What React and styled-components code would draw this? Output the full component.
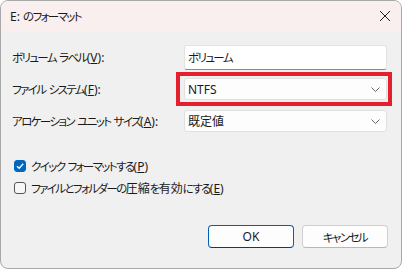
import React from 'react';
import styled, { createGlobalStyle } from 'styled-components';

const Global = createGlobalStyle`
  body {
    margin: 0;
    background: #ffffff;
    font-family: "Noto Sans", "Noto Sans CJK JP", sans-serif;
    font-feature-settings: "palt";
    font-size: 12px;
    color: #1a1a1a;
  }
`;

const Chevron = () => (
  <svg width="9" height="5" viewBox="0 0 9 5">
    <path d="M0.5 0.5 L4.5 4.5 L8.5 0.5" fill="none" stroke="#555" strokeWidth="0.9" />
  </svg>
);

const Check = () => (
  <svg width="10" height="10" viewBox="0 0 10 10">
    <path d="M2 5.2 L4.2 7.3 L8.2 2.8" fill="none" stroke="#fff" strokeWidth="1.3" />
  </svg>
);

const App = () => {
  return (
    <>
      <Global />
      <Window>
        <TitleBar>
          <Title>
            E: <Kana>のフォーマット</Kana>
          </Title>
          <Close>
            <svg width="12" height="12" viewBox="0 0 12 12">
              <path d="M1 1 L11 11 M11 1 L1 11" stroke="#222" strokeWidth="1" />
            </svg>
          </Close>
        </TitleBar>
        <Body>
          <Form>
            <Label>
              <Kana>ボリューム</Kana> <Kana>ラベル</Kana>(<u>V</u>):
            </Label>
            <Input>
              <Kana>ボリューム</Kana>
            </Input>
            <Label>
              <Kana>ファイル</Kana> <Kana>システム</Kana>(<u>F</u>):
            </Label>
            <Highlight>
              <Select>
                <span>NTFS</span>
                <Chevron />
              </Select>
            </Highlight>
            <Label>
              <Kana>アロケーション</Kana> <Kana>ユニット</Kana> <Kana>サイズ</Kana>(<u>A</u>):
            </Label>
            <Select>
              <span>既定値</span>
              <Chevron />
            </Select>
          </Form>
          <Options>
            <Option>
              <Box checked>
                <Check />
              </Box>
              <OptionText>
                <Kana>クイック</Kana> <Kana>フォーマットする</Kana>(<u>P</u>)
              </OptionText>
            </Option>
            <Option>
              <Box />
              <OptionText>
                <Kana>ファイルとフォルダーの</Kana>圧縮<Kana>を</Kana>有効<Kana>にする</Kana>(<u>E</u>)
              </OptionText>
            </Option>
          </Options>
          <Buttons>
            <Button primary>OK</Button>
            <Button>
              <Kana>キャンセル</Kana>
            </Button>
          </Buttons>
        </Body>
      </Window>
    </>
  );
};

export default App;

const Kana = styled.span`
  font-size: 11.5px;
  letter-spacing: -1.6px;
`;

const Window = styled.div`
  width: 400px;
  height: 267px;
  border: 1px solid #a8a8a8;
  border-radius: 8px;
  background: #f0f0f0;
  overflow: hidden;
  display: flex;
  flex-direction: column;
`;

const TitleBar = styled.div`
  height: 30px;
  background: #f9efee;
  display: flex;
  align-items: center;
  justify-content: space-between;
  padding: 0 9px 0 9px;
  flex-shrink: 0;
`;

const Title = styled.span`
  font-size: 12px;
  color: #1a1a1a;
  white-space: nowrap;
`;

const Close = styled.span`
  display: flex;
  width: 14px;
  justify-content: center;
`;

const Body = styled.div`
  flex: 1;
  padding: 10px 0 0 11px;
  display: flex;
  flex-direction: column;
`;

const Form = styled.div`
  display: grid;
  grid-template-columns: 172px 203px;
  grid-auto-rows: 32px;
  align-items: center;
`;

const Label = styled.div`
  font-size: 12px;
  white-space: nowrap;
  u {
    text-decoration-thickness: 1px;
  }
`;

const Input = styled.div`
  height: 25px;
  box-sizing: border-box;
  background: #ffffff;
  border: 1px solid #e3e3e3;
  border-bottom: 1px solid #8a8a8a;
  border-radius: 3px;
  display: flex;
  align-items: center;
  padding-left: 3px;
  font-size: 12px;
`;

const Highlight = styled.div`
  margin: 0 -5px 0 -8px;
  border: 4px solid #e5202e;
  padding: 2px 1px 2px 4px;
`;

const Select = styled.div`
  height: 22px;
  box-sizing: border-box;
  background: #fdfdfd;
  border: 1px solid #e0e0e0;
  border-radius: 3px;
  display: flex;
  align-items: center;
  justify-content: space-between;
  padding: 0 6px 0 3px;
  font-size: 12px;
`;

const Options = styled.div`
  display: flex;
  flex-direction: column;
  gap: 10px;
  margin-top: 23px;
  padding-left: 2px;
`;

const Option = styled.label`
  display: flex;
  align-items: center;
  gap: 5px;
  height: 12px;
`;

const OptionText = styled.span`
  font-size: 12px;
  white-space: nowrap;
`;

const Box = styled.span`
  width: 12px;
  height: 12px;
  box-sizing: border-box;
  border-radius: 3px;
  display: flex;
  align-items: center;
  justify-content: center;
  background: ${p => (p.checked ? '#0067c0' : '#f7f7f7')};
  border: 1px solid ${p => (p.checked ? '#0067c0' : '#555')};
`;

const Buttons = styled.div`
  display: flex;
  justify-content: flex-end;
  gap: 8px;
  margin-top: 31px;
  padding-right: 13px;
`;

const Button = styled.div`
  width: 86px;
  height: 23px;
  box-sizing: border-box;
  border-radius: 4px;
  background: #fdfdfd;
  border: 1px solid ${p => (p.primary ? '#005fb8' : '#d0d0d0')};
  border-bottom-color: ${p => (p.primary ? '#003e7a' : '#b8b8b8')};
  display: flex;
  align-items: center;
  justify-content: center;
  font-size: 12px;
`;
